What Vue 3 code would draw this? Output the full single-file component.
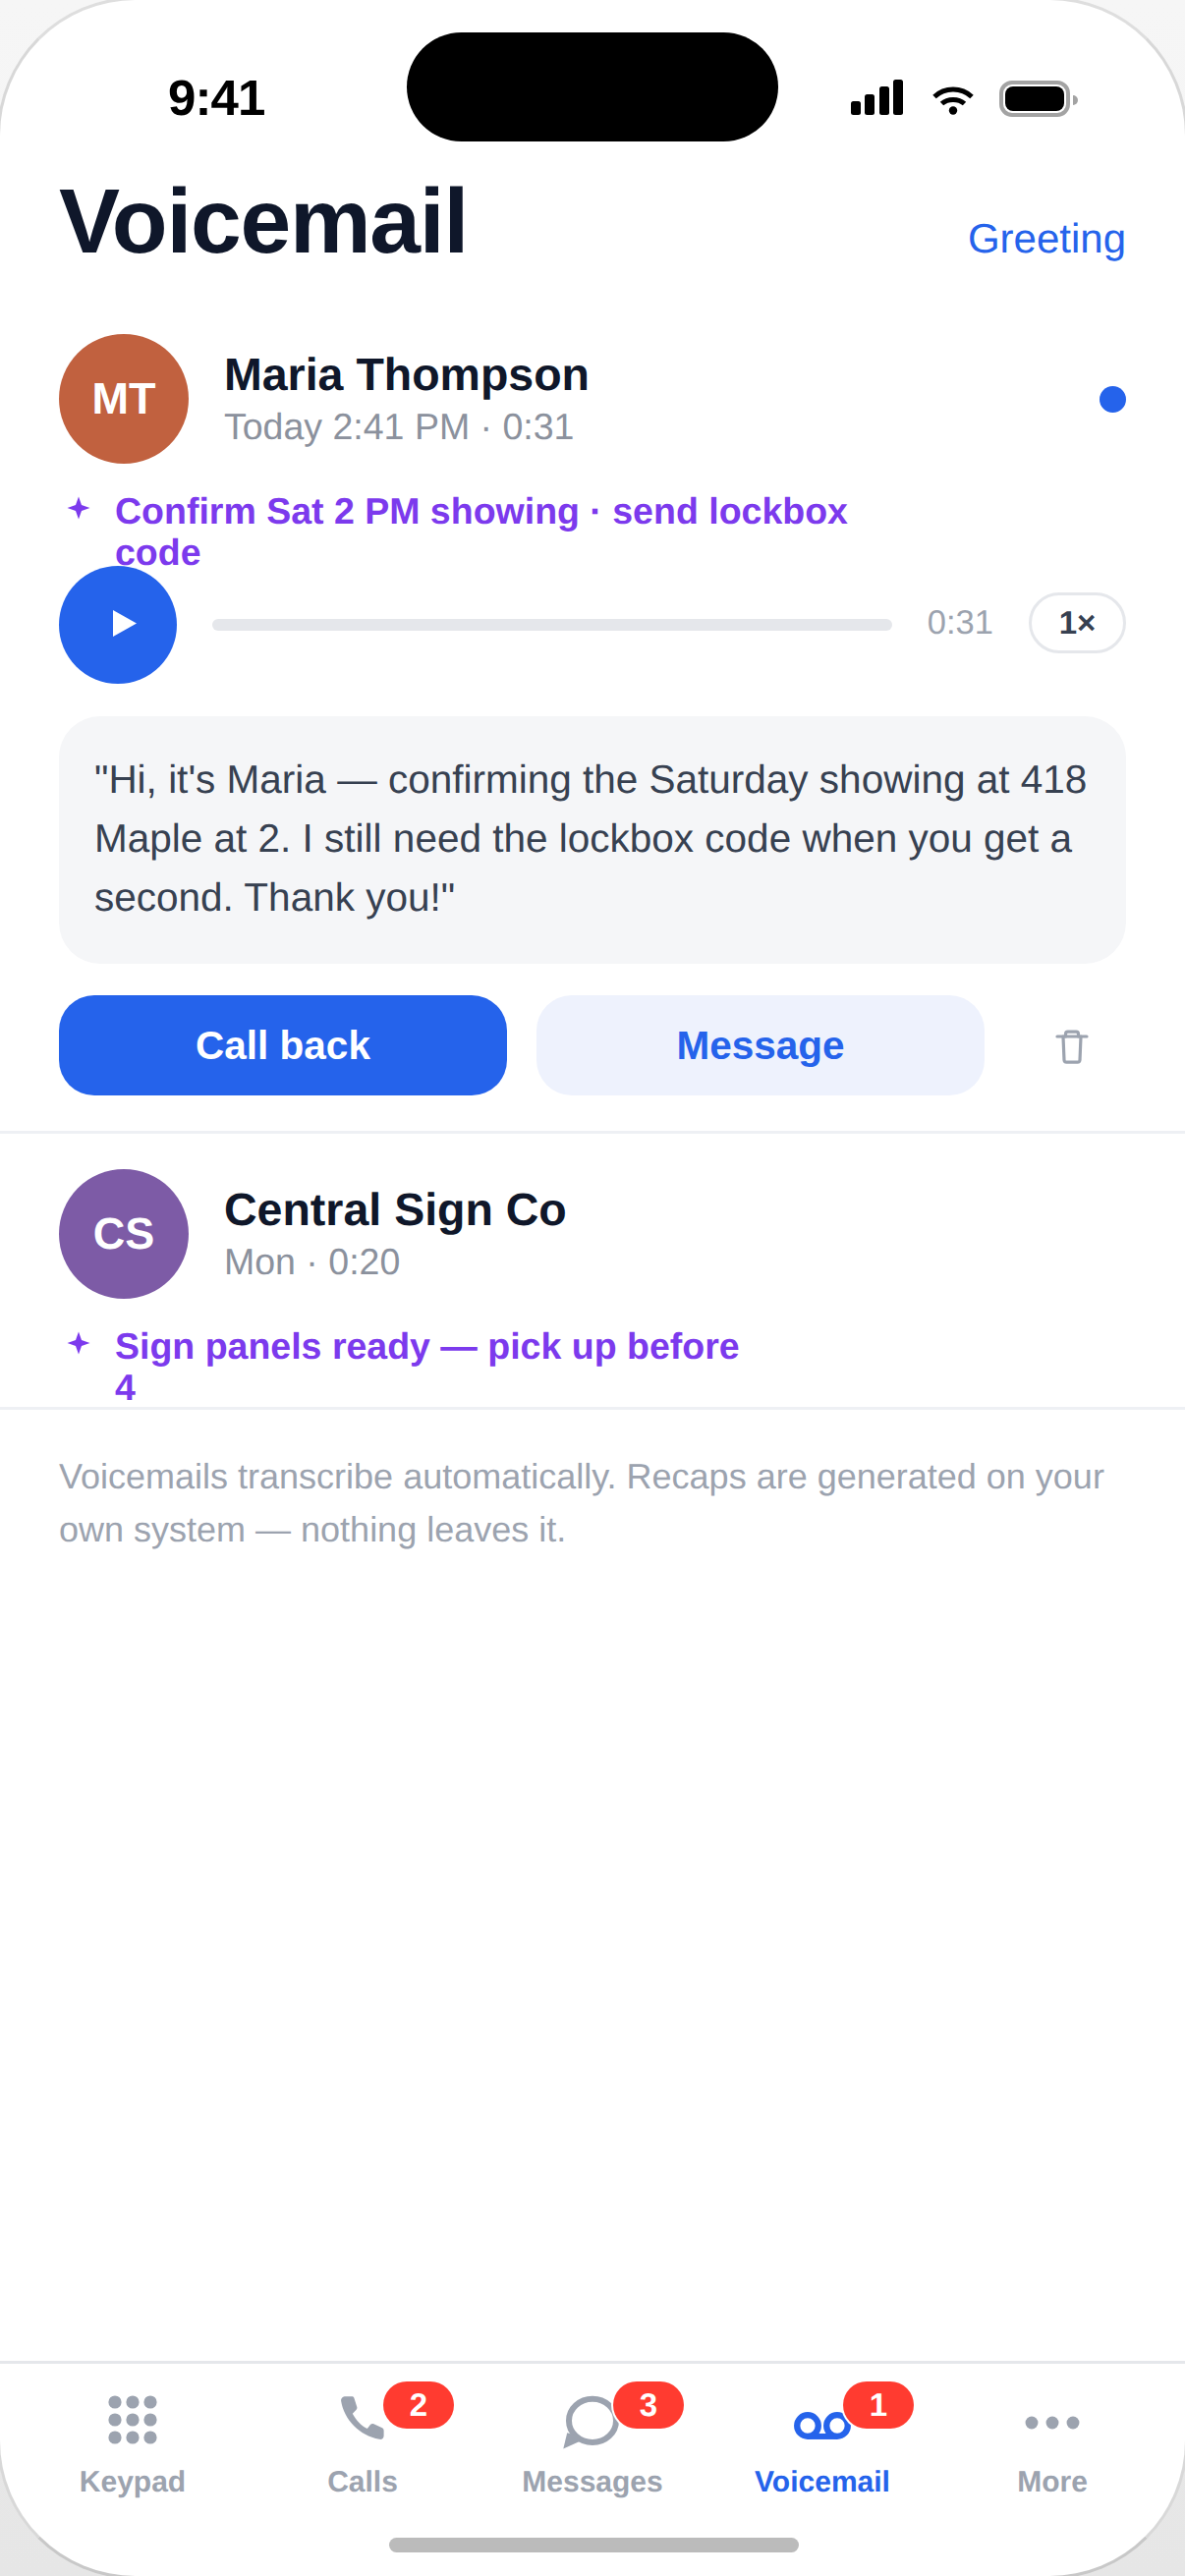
<script setup>
const tabs = [
  { label: 'Keypad', icon: 'keypad' },
  { label: 'Calls', icon: 'phone', badge: 2 },
  { label: 'Messages', icon: 'bubble', badge: 3 },
  { label: 'Voicemail', icon: 'voicemail', badge: 1, active: true },
  { label: 'More', icon: 'more' },
]
const keypadDots = [6, 12, 18].flatMap((cy) => [6, 12, 18].map((cx) => ({ cx, cy })))
</script>

<template>
  <div class="device">
    <div class="screen">
      <div class="island"></div>

      <header class="status">
        <span class="time">9:41</span>
        <div class="status-icons">
          <div class="signal">
            <i class="b1"></i><i class="b2"></i><i class="b3"></i><i class="b4"></i>
          </div>
          <svg class="wifi" viewBox="0 0 42 30" width="42" height="30" fill="none" stroke="#000" stroke-width="5">
            <path d="M2 11.5C12.5 1.5 29.5 1.5 40 11.5" />
            <path d="M9.5 18.5C15.5 13 26.5 13 32.5 18.5" />
            <circle cx="21" cy="25.5" r="4.2" fill="#000" stroke="none" />
          </svg>
          <div class="battery"><div class="cell"></div><div class="nub"></div></div>
        </div>
      </header>

      <div class="title-row">
        <h1>Voicemail</h1>
        <a class="greeting">Greeting</a>
      </div>

      <main class="list">
        <section class="item">
          <div class="head">
            <div class="avatar mt">MT</div>
            <div class="who">
              <div class="name">Maria Thompson</div>
              <div class="sub">Today 2:41 PM · 0:31</div>
            </div>
            <span class="dot"></span>
          </div>
          <div class="recap">
            <svg class="spark" viewBox="0 0 24 24" width="24" height="24"><path d="M12 0.5L15 9L23.5 12L15 15L12 23.5L9 15L0.5 12L9 9Z" fill="#7c3aed" /></svg>
            <p>Confirm Sat 2 PM showing · send lockbox<br />code</p>
          </div>
          <div class="player">
            <button class="play">
              <svg viewBox="0 0 24 27" width="24" height="27"><path d="M0 0L24 13.5L0 27Z" fill="#fff" /></svg>
            </button>
            <div class="track"></div>
            <span class="dur">0:31</span>
            <span class="speed">1×</span>
          </div>
          <div class="transcript">"Hi, it's Maria — confirming the Saturday showing at 418 Maple at 2. I still need the lockbox code when you get a second. Thank you!"</div>
          <div class="actions">
            <button class="btn primary">Call back</button>
            <button class="btn soft">Message</button>
            <button class="trash">
              <svg viewBox="0 0 36 40" width="36" height="40" fill="none" stroke="#9ca3af" stroke-width="3.2" stroke-linecap="round" stroke-linejoin="round">
                <path d="M3 11H33" />
                <path d="M11.5 11V8.5C11.5 7 12.3 6.2 13.8 6.2H22.2C23.7 6.2 24.5 7 24.5 8.5V11" />
                <path d="M9 11L10 35C10.1 36.5 10.9 37.2 12.4 37.2H23.6C25.1 37.2 25.9 36.5 26 35L27 11" />
              </svg>
            </button>
          </div>
        </section>

        <section class="item second">
          <div class="head">
            <div class="avatar cs">CS</div>
            <div class="who">
              <div class="name">Central Sign Co</div>
              <div class="sub">Mon · 0:20</div>
            </div>
          </div>
          <div class="recap">
            <svg class="spark" viewBox="0 0 24 24" width="24" height="24"><path d="M12 0.5L15 9L23.5 12L15 15L12 23.5L9 15L0.5 12L9 9Z" fill="#7c3aed" /></svg>
            <p>Sign panels ready — pick up before<br />4</p>
          </div>
        </section>

        <p class="note">Voicemails transcribe automatically. Recaps are generated on your own system — nothing leaves it.</p>
      </main>

      <nav class="tabbar">
        <div v-for="tab in tabs" :key="tab.label" class="tab" :class="{ active: tab.active }">
          <div class="tab-icon">
            <svg viewBox="0 0 24 24" width="72" height="72">
              <g v-if="tab.icon === 'keypad'" fill="#9ca3af">
                <circle v-for="d in keypadDots" :key="d.cx + '-' + d.cy" :cx="d.cx" :cy="d.cy" r="2.2" />
              </g>
              <path v-else-if="tab.icon === 'phone'" fill="#9ca3af" d="M6.2 4.1L8.3 4.1C8.8 4.1 9.1 4.3 9.2 4.8L10.1 7.7C10.2 8.1 10.1 8.4 9.8 8.7L8.6 9.9C9.7 12 11.4 13.9 13.6 15L14.7 13.6C15 13.3 15.4 13.2 15.8 13.4L18.5 14.7C19 14.9 19.2 15.2 19.2 15.7V17.4C19.2 18.2 18.5 18.8 17.7 18.6C10.9 17.4 5.7 11.9 4.7 5.6C4.6 4.8 5.3 4.1 6.2 4.1Z" />
              <g v-else-if="tab.icon === 'bubble'">
                <ellipse cx="12" cy="12.3" rx="8" ry="7.35" fill="none" stroke="#9ca3af" stroke-width="2" />
                <path d="M3.4 16.4L2.1 21.8L8 19.2L6 17.2Z" fill="#9ca3af" />
              </g>
              <g v-else-if="tab.icon === 'voicemail'" fill="none" stroke="#2563eb">
                <circle cx="7" cy="14" r="3.6" stroke-width="2.1" />
                <circle cx="17" cy="14" r="3.6" stroke-width="2.1" />
                <path d="M7 17.65H17" stroke-width="2" />
              </g>
              <g v-else fill="#9ca3af">
                <circle cx="5" cy="13" r="2.15" />
                <circle cx="12" cy="13" r="2.15" />
                <circle cx="19" cy="13" r="2.15" />
              </g>
            </svg>
            <span v-if="tab.badge" class="badge">{{ tab.badge }}</span>
          </div>
          <span class="tab-label">{{ tab.label }}</span>
        </div>
      </nav>

      <div class="home"></div>
    </div>
  </div>
</template>

<style scoped>
.device {
  width: 1206px;
  height: 2622px;
  background: linear-gradient(180deg, #f6f6f6 0%, #e6e6e6 100%);
  font-family: "Liberation Sans", Arial, sans-serif;
  text-rendering: geometricPrecision;
  overflow: hidden;
}
.screen {
  position: relative;
  width: 1212px;
  height: 2628px;
  margin: -3px;
  box-sizing: border-box;
  border: 3px solid;
  border-color: #dedede #d8d8d8 #c8c8c8;
  border-radius: 141px;
  background: #fff;
  overflow: hidden;
  display: flex;
  flex-direction: column;
}
.island {
  position: absolute;
  left: 414px;
  top: 33px;
  width: 378px;
  height: 111px;
  border-radius: 56px;
  background: #000;
}
.status {
  height: 177px;
  flex: none;
  display: flex;
  justify-content: space-between;
  padding: 0 117px 0 171px;
  box-sizing: border-box;
}
.time {
  font-size: 51px;
  font-weight: 700;
  line-height: 60px;
  margin-top: 70px;
  height: 60px;
  letter-spacing: -0.9px;
  color: #000;
}
.status-icons {
  display: flex;
  align-items: flex-start;
  gap: 30px;
  margin-top: 81px;
}
.signal {
  display: flex;
  align-items: flex-end;
  gap: 4.5px;
  height: 36px;
}
.signal i {
  display: block;
  width: 10px;
  border-radius: 2.5px;
  background: #000;
}
.signal .b1 { height: 14px; }
.signal .b2 { height: 21px; }
.signal .b3 { height: 29px; }
.signal .b4 { height: 36px; }
.wifi {
  margin-top: 6px;
}
.battery {
  position: relative;
  width: 72px;
  height: 37px;
  margin-top: 1px;
  margin-left: -4px;
  box-sizing: border-box;
  border: 4px solid #a3a3a3;
  border-radius: 13px;
  padding: 2px;
}
.cell {
  width: 100%;
  height: 100%;
  background: #000;
  border-radius: 8px;
}
.nub {
  position: absolute;
  right: -12px;
  top: 11px;
  width: 5px;
  height: 10px;
  background: #a3a3a3;
  border-radius: 0 5px 5px 0;
}
.title-row {
  display: flex;
  justify-content: space-between;
  align-items: baseline;
  padding: 0 60px;
  flex: none;
}
h1 {
  margin: 0;
  font-size: 93px;
  line-height: 96px;
  font-weight: 700;
  letter-spacing: -1.26px;
  color: #0f172a;
}
.greeting {
  font-size: 42px;
  color: #2563eb;
}
.list {
  flex: 1;
  min-height: 0;
}
.item {
  padding: 67px 60px 36px;
  border-bottom: 3px solid #eef0f4;
}
.item.second {
  padding-top: 36px;
  padding-bottom: 0;
  height: 281px;
  box-sizing: border-box;
}
.head {
  display: flex;
  align-items: center;
  gap: 36px;
}
.avatar {
  width: 132px;
  height: 132px;
  border-radius: 50%;
  flex: none;
  display: flex;
  align-items: center;
  justify-content: center;
  color: #fff;
  font-size: 45px;
  font-weight: 700;
}
.avatar.mt { background: #c1613f; }
.avatar.cs { background: #7d5ba6; }
.who {
  flex: 1;
  min-width: 0;
}
.name {
  font-size: 46.5px;
  font-weight: 700;
  line-height: 56px;
  color: #0f172a;
}
.sub {
  font-size: 37.5px;
  line-height: 50px;
  color: #8b919d;
}
.dot {
  width: 27px;
  height: 27px;
  border-radius: 50%;
  background: #2563eb;
  flex: none;
}
.recap {
  display: flex;
  align-items: flex-start;
  margin-top: 27px;
  padding-left: 8px;
  height: 64px;
  color: #7c3aed;
}
.spark {
  flex: none;
  margin-top: 6px;
  margin-right: 25px;
}
.recap p {
  margin: 0;
  font-size: 37.5px;
  line-height: 42px;
  font-weight: 700;
  white-space: nowrap;
}
.player {
  display: flex;
  align-items: center;
  margin-top: 13px;
}
.play {
  width: 120px;
  height: 120px;
  border: 0;
  border-radius: 50%;
  background: #2563eb;
  padding: 0 0 3px 14px;
  display: flex;
  align-items: center;
  justify-content: center;
  flex: none;
}
.track {
  flex: 1;
  height: 12px;
  margin: 0 36px;
  border-radius: 6px;
  background: #e5e7eb;
}
.dur {
  font-size: 34.5px;
  color: #9ca3af;
  margin-right: 36px;
  margin-bottom: 3px;
}
.speed {
  box-sizing: border-box;
  width: 99px;
  height: 62px;
  margin-bottom: 4px;
  border: 3px solid #e5e7eb;
  border-radius: 31px;
  display: flex;
  align-items: center;
  justify-content: center;
  font-size: 33px;
  font-weight: 700;
  color: #374151;
}
.transcript {
  margin-top: 33px;
  padding: 34px 36px 38px;
  border-radius: 42px;
  background: #f5f6f8;
  font-size: 40.5px;
  line-height: 60px;
  color: #374151;
}
.actions {
  display: flex;
  gap: 30px;
  margin-top: 32px;
}
.btn {
  flex: 1;
  height: 102px;
  border: 0;
  border-radius: 36px;
  font-family: inherit;
  font-size: 40.5px;
  font-weight: 700;
}
.primary {
  background: #2563eb;
  color: #fff;
}
.soft {
  background: #eef2fd;
  color: #2563eb;
}
.trash {
  width: 114px;
  height: 102px;
  flex: none;
  border: 0;
  padding: 0 0 0 3px;
  background: none;
  display: flex;
  align-items: center;
  justify-content: center;
}
.note {
  margin: 0;
  padding: 41px 60px 0;
  font-size: 36px;
  line-height: 54px;
  color: #9ca3af;
}
.tabbar {
  flex: none;
  height: 219px;
  box-sizing: border-box;
  border-top: 3px solid #e5e7eb;
  padding: 21px 18px 0;
  display: flex;
}
.tab {
  flex: 1;
  display: flex;
  flex-direction: column;
  align-items: center;
}
.tab-icon {
  position: relative;
  width: 72px;
  height: 72px;
}
.tab-icon svg {
  display: block;
}
.badge {
  position: absolute;
  left: 57px;
  top: -3px;
  width: 72px;
  height: 48px;
  border-radius: 24px;
  background: #ff3b30;
  box-shadow: 0 0 0 2px #fff;
  color: #fff;
  font-size: 33px;
  font-weight: 700;
  display: flex;
  align-items: center;
  justify-content: center;
}
.tab-label {
  margin-top: 10px;
  font-size: 30px;
  line-height: 36px;
  font-weight: 700;
  color: #9ca3af;
}
.tab.active .tab-label {
  color: #2563eb;
}
.home {
  position: absolute;
  left: 396px;
  bottom: 24px;
  width: 417px;
  height: 15px;
  border-radius: 8px;
  background: #bbb;
}
</style>
